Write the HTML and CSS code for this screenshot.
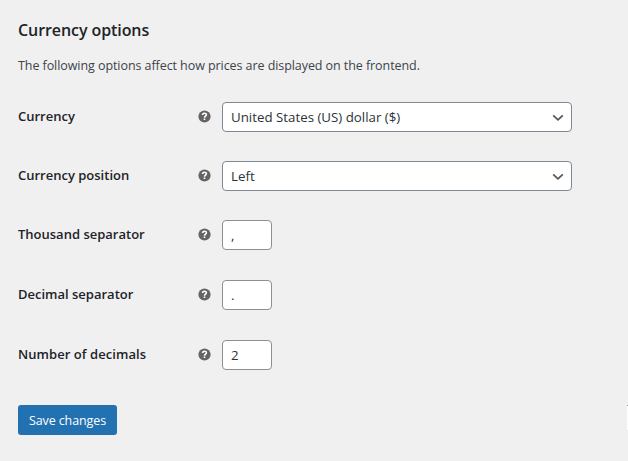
FILE: index.html
```html
<!DOCTYPE html>
<html lang="en"><head><meta charset="utf-8"><title>Currency options</title><link rel="stylesheet" href="styles.css"></head>
<body>
<svg class="defs" width="0" height="0"><symbol id="help" viewBox="-.5 -.5 13 13"><circle cx="6" cy="6" r="6.1" fill="#646464"/><path d="M4.1 4.5C4.1 2.2 7.9 2.3 7.9 4.3C7.9 5.6 6 5.6 6 7.2" fill="none" stroke="#fff" stroke-width="1.6"/><rect x="5.2" y="8" width="1.6" height="1.5" fill="#fff"/></symbol>
<symbol id="chev" viewBox="0 0 12 8"><path d="M1.2 1.3L6 5.9L10.8 1.3" fill="none" stroke="#555" stroke-width="1.7"/></symbol></svg>
<main class="panel">
<h2 class="title">Currency options</h2>
<p class="intro">The following options affect how prices are displayed on the frontend.</p>
<form class="form">
<div class="row"><span class="label">Currency</span><svg class="help"><use href="#help"/></svg><div class="select"><span>United States (US) dollar ($)</span><svg class="chev"><use href="#chev"/></svg></div></div>
<div class="row"><span class="label">Currency position</span><svg class="help"><use href="#help"/></svg><div class="select"><span>Left</span><svg class="chev"><use href="#chev"/></svg></div></div>
<div class="row"><span class="label">Thousand separator</span><svg class="help"><use href="#help"/></svg><div class="input">,</div></div>
<div class="row"><span class="label">Decimal separator</span><svg class="help"><use href="#help"/></svg><div class="input">.</div></div>
<div class="row"><span class="label">Number of decimals</span><svg class="help"><use href="#help"/></svg><div class="input">2</div></div>
</form>
<button class="save">Save changes</button>
</main>
<div class="edge"></div>
</body></html>
```
FILE: styles.css
```css
*{box-sizing:border-box}
body{margin:0;width:628px;height:461px;position:relative;overflow:hidden;background:#f0f0f1;font-family:"Open Sans","Noto Sans",sans-serif;font-size:13px;color:#3c434a}
.defs{position:absolute}
.panel{padding:18px 0 0 18px}
.title{margin:0;height:24px;line-height:24px;font-size:16px;font-weight:600;letter-spacing:-.08px;color:#1d2327}
.intro{margin:14px 0 0;height:20px;line-height:20px;font-size:12.5px;letter-spacing:-.07px;white-space:nowrap}
.form{margin-top:26px;display:grid;grid-template-rows:59px 59px 60px 60px 30px}
.row{display:grid;grid-template-columns:180px 24px 350px;height:30px;align-items:center}
.label{font-size:13px;font-weight:600;color:#1d2327;line-height:20px;padding-bottom:2px}
.row:nth-child(n+5) .label{letter-spacing:.06px}
.help{width:13px;height:13px;margin-bottom:1px}
.select,.input{height:30px;border:1px solid #8c8f94;border-radius:4px;background:#fff;color:#2c3338;padding:0 7px 0 8px;display:flex;align-items:center;justify-content:space-between;font-size:13.3px}
.select{border-color:#7e8993}
.input{width:50px}
.chev{width:12px;height:8px;margin-top:1px}
.save{display:block;margin-top:35px;width:99px;height:30px;border:0;border-radius:3px;background:#2271b1;color:#fff;font:12.5px "Open Sans",sans-serif;letter-spacing:-.1px;padding:0;white-space:nowrap}
.edge{position:absolute;right:0;top:405px;width:1px;height:25px;background:#fff;border-top:1px solid #8c8f94}
```
